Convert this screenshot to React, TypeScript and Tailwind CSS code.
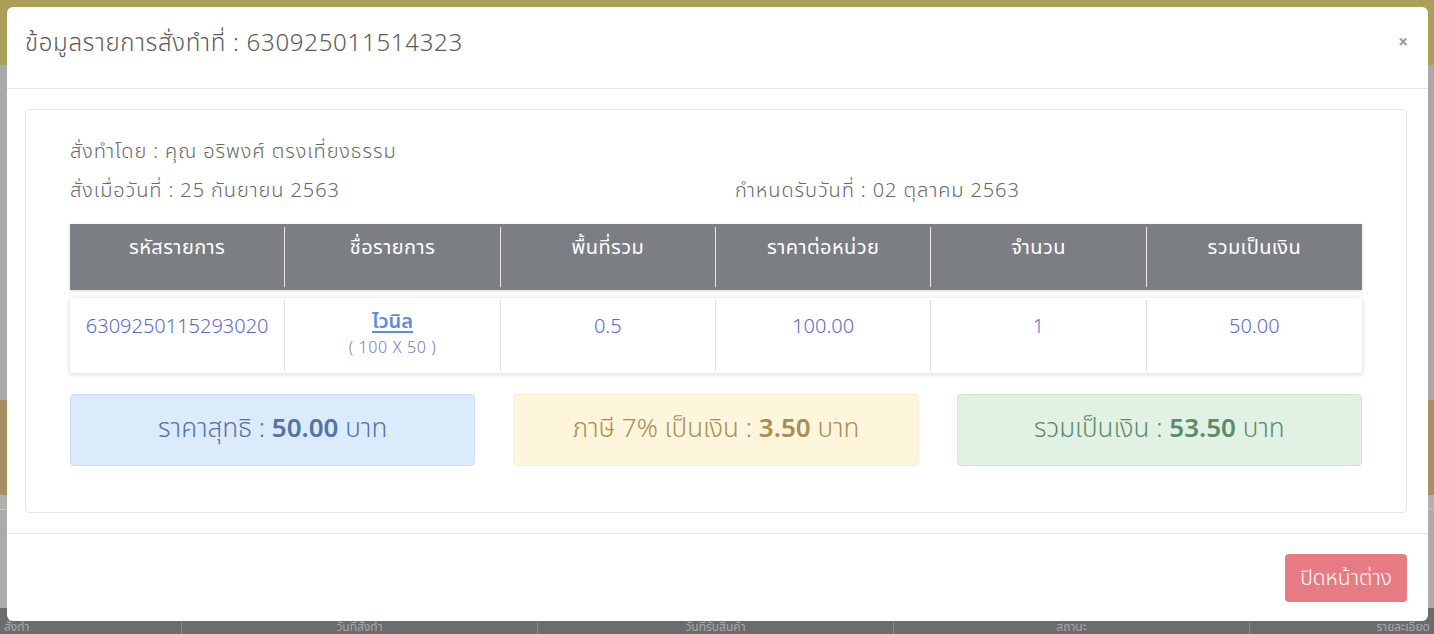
const FONT = "font-['Noto_Sans','Noto_Sans_Thai','Liberation_Sans',sans-serif]";

const headers = ['รหัสรายการ', 'ชื่อรายการ', 'พื้นที่รวม', 'ราคาต่อหน่วย', 'จำนวน', 'รวมเป็นเงิน'];

function Backdrop() {
  return (
    <div className="flex h-[634px] flex-col">
      <div className="h-[65px] bg-[#aca058]" />
      <div className="h-[335px] bg-[#a9a9a9]" />
      <div className="h-[95px] bg-[#a88f5f]" />
      <div className="h-[15px] border-b border-[#c4c4c4] bg-[#b0b0b0]" />
      <div className="flex-1 bg-[#ababab]" />
      <div className="grid h-[26px] grid-cols-[181px_356px_356px_356px_1fr] overflow-hidden bg-[#6b6c6e] pt-[12px] text-[12px] leading-[14px] text-[#a9a9a9]">
        <div className="pl-[4px]">สั่งทำ</div>
        <div className="border-l border-[#8a8a8a] text-center">วันที่สั่งทำ</div>
        <div className="border-l border-[#8a8a8a] text-center">วันที่รับสินค้า</div>
        <div className="border-l border-[#8a8a8a] text-center">สถานะ</div>
        <div className="border-l border-[#8a8a8a] pr-[4px] text-right">รายละเอียด</div>
      </div>
    </div>
  );
}

function SummaryBox({ label, value, box, text }: { label: string; value: string; box: string; text: string }) {
  return (
    <div className={`flex h-[72px] items-start justify-center rounded-[4px] border pt-[16px] text-[26px] font-light leading-[32px] ${box} ${text}`}>
      <span>
        {label} : <b className="font-semibold">{value}</b> บาท
      </span>
    </div>
  );
}

export default function App() {
  return (
    <div className={`relative h-[634px] w-[1434px] overflow-hidden ${FONT}`}>
      <Backdrop />

      <div className="absolute left-[7px] top-[7px] flex h-[614px] w-[1421px] flex-col rounded-[6px] bg-white">
        {/* header */}
        <div className="flex h-[82px] items-start justify-between border-b border-[#e5e5e5] pl-[18px] pr-[21px] pt-[20px]">
          <h4 className="text-[24px] font-light leading-[30px] tracking-[0.03em] text-[#5a5a5a]">
            ข้อมูลรายการสั่งทำที่ : 630925011514323
          </h4>
          <span className="mr-[-1px] text-[17px] font-bold leading-[30px] text-[#9a9a9a]">×</span>
        </div>

        {/* body */}
        <div className="pl-[18px] pr-[21px] pt-[20px]">
          <div className="rounded-[4px] border border-[#e6e6e6] px-[44px] pb-[46px] pt-[27px]">
            <div className="flex flex-col gap-[11px] text-[20px] font-light leading-[28px] tracking-[0.045em] text-[#6a6a6a]">
              <div>สั่งทำโดย : คุณ อริพงศ์ ตรงเที่ยงธรรม</div>
              <div className="flex">
                <div className="w-[665px]">สั่งเมื่อวันที่ : 25 กันยายน 2563</div>
                <div>กำหนดรับวันที่ : 02 ตุลาคม 2563</div>
              </div>
            </div>

            {/* table */}
            <div className="mt-[20px]">
              <div className="grid h-[66px] grid-cols-6 bg-[#7b7e82] py-[3px] text-[20px] text-white shadow-[0_1px_3px_rgba(0,0,0,0.15)]">
                {headers.map((h, i) => (
                  <div
                    key={h}
                    className={`pt-[6px] text-center leading-[28px] tracking-[0.02em] ${i < 5 ? 'border-r border-[#e8e8e8]' : ''}`}
                  >
                    {h}
                  </div>
                ))}
              </div>
              <div className="mt-[8px] grid h-[75px] grid-cols-6 bg-white py-[2px] text-[20px] font-light text-[#5f6cc2] shadow-[0_1px_5px_rgba(60,60,100,0.22)]">
                <div className="border-r border-[#dedede] pt-[12px] text-center leading-[28px]">6309250115293020</div>
                <div className="flex flex-col items-center border-r border-[#dedede] pt-[7px]">
                  <a className="font-semibold leading-[28px] text-[#5b8fd9] underline underline-offset-[3px]">ไวนิล</a>
                  <span className="mt-[2px] text-[16px] leading-[20px] tracking-[0.04em] text-[#7a79c2]">( 100 X 50 )</span>
                </div>
                <div className="border-r border-[#dedede] pt-[12px] text-center leading-[28px]">0.5</div>
                <div className="border-r border-[#dedede] pt-[12px] text-center leading-[28px]">100.00</div>
                <div className="border-r border-[#dedede] pt-[12px] text-center leading-[28px] text-[#8c68c8]">1</div>
                <div className="pt-[12px] text-center leading-[28px]">50.00</div>
              </div>
            </div>

            {/* totals */}
            <div className="mt-[21px] grid grid-cols-3 gap-[38px]">
              <SummaryBox label="ราคาสุทธิ" value="50.00" box="bg-[#dcebfc] border-[#c9e0fa]" text="text-[#5274a6]" />
              <SummaryBox label="ภาษี 7% เป็นเงิน" value="3.50" box="bg-[#fef6dc] border-[#fcefc9]" text="text-[#a88e4f]" />
              <SummaryBox label="รวมเป็นเงิน" value="53.50" box="bg-[#e1f2e5] border-[#cfe9d5]" text="text-[#5e8a6b]" />
            </div>
          </div>
        </div>

        {/* footer */}
        <div className="mt-[20px] flex flex-1 items-start justify-end border-t border-[#e5e5e5] pr-[21px] pt-[20px]">
          <button className="h-[48px] rounded-[4px] bg-[#e77b84] px-[15px] text-[21px] font-light text-white">ปิดหน้าต่าง</button>
        </div>
      </div>
    </div>
  );
}
